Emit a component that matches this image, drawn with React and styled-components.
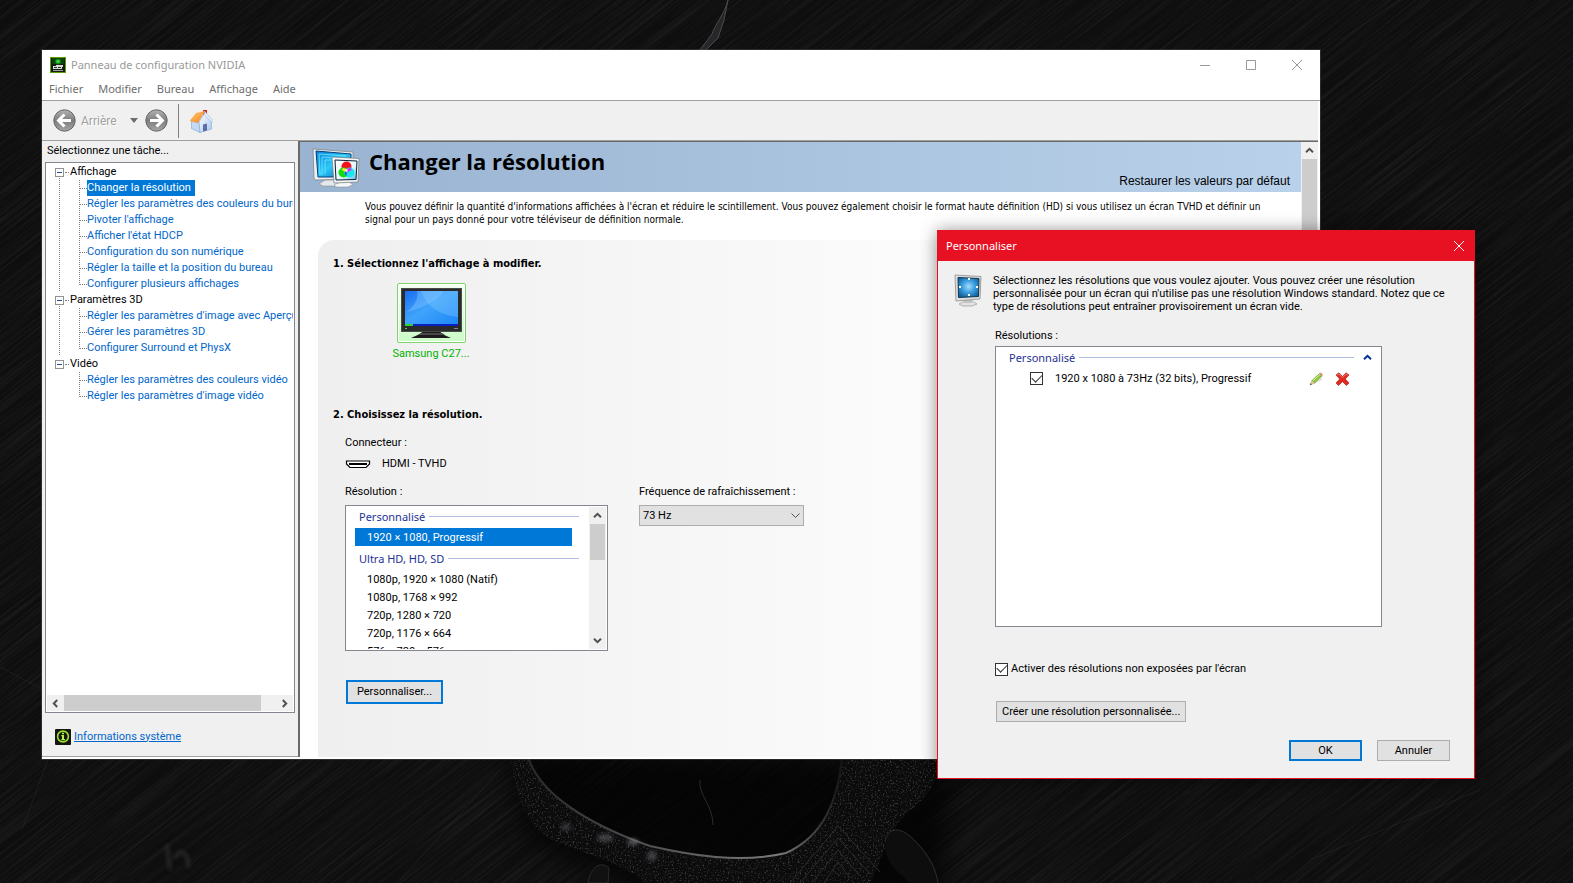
import { useState } from 'react';
import styled, { createGlobalStyle, css } from 'styled-components';

const Fonts = {
  TAHOMA: "Roboto, 'DejaVu Sans Condensed', sans-serif",
  CONDENSED: "'DejaVu Sans Condensed', 'DejaVu Sans', sans-serif",
  SEGOE: "'Noto Sans', 'Open Sans', sans-serif",
  ARIAL: "'Liberation Sans', Arial, sans-serif",
  TREBUCHET: "'Open Sans', 'Noto Sans', sans-serif",
};

const Colors = {
  FACE: '#f0f0f0',
  BUTTON: '#e1e1e1',
  BUTTON_BORDER: '#adadad',
  BOX_BORDER: '#828790',
  SHADOW: '#a0a0a0',
  DARK_SHADOW: '#696969',
  SELECTED: '#0078d7',
  LINK: '#0066cc',
  GROUP: '#1e3296',
  RED: '#e81123',
  THUMB: '#cdcdcd',
};

const GlobalStyle = createGlobalStyle`
  * {
    box-sizing: border-box;
  }

  body {
    margin: 0;
    background: #0e0e0f;
    font: 11px/16px ${Fonts.TAHOMA};
    color: #000;
  }

  ul {
    list-style: none;
    margin: 0;
    padding: 0;
  }

  h1, h2, h3, p {
    margin: 0;
    font-size: inherit;
  }

  button, select, input {
    margin: 0;
    font: inherit;
    color: inherit;
  }

  svg {
    display: block;
    flex: none;
  }
`;

/* ---------- Desktop ---------- */

const Desktop = styled.div`
  position: relative;
  min-height: 100vh;
  overflow: hidden;
`;

const WallpaperSvg = styled.svg`
  position: absolute;
  inset: 0;
  width: 100%;
  height: 100%;
`;

const Wallpaper = () => (
  <WallpaperSvg viewBox="0 0 1573 883" preserveAspectRatio="xMidYMid slice" aria-hidden="true">
    <defs>
      <filter id="brushed" x="0" y="0" width="100%" height="100%">
        <feTurbulence type="fractalNoise" baseFrequency="0.008 0.6" numOctaves="3" seed="8" />
        <feColorMatrix values="0 0 0 0 1  0 0 0 0 1  0 0 0 0 1  0.5 0 0 0 -0.19" />
      </filter>
      <filter id="speckle" x="0" y="0" width="100%" height="100%">
        <feTurbulence type="fractalNoise" baseFrequency="0.6" numOctaves="2" seed="3" />
        <feColorMatrix values="0 0 0 0 1  0 0 0 0 1  0 0 0 0 1  1.6 0 0 0 -0.86" />
        <feComposite in2="SourceGraphic" operator="in" />
      </filter>
      <filter id="soft" x="-20%" y="-20%" width="140%" height="140%">
        <feGaussianBlur stdDeviation="14" />
      </filter>
      <filter id="smudge" x="-50%" y="-50%" width="200%" height="200%">
        <feGaussianBlur stdDeviation="2" />
      </filter>
      <linearGradient id="rim" x1="0" y1="0" x2="1" y2="0">
        <stop offset="0" stopColor="#2a2a2c" />
        <stop offset=".6" stopColor="#66666a" />
        <stop offset=".8" stopColor="#7a7a7c" />
        <stop offset="1" stopColor="#141415" />
      </linearGradient>
    </defs>
    <rect width="1573" height="883" fill="#0e0e0f" />
    <g transform="rotate(-38 786 441)">
      <rect x="-300" y="-500" width="2200" height="1900" filter="url(#brushed)" opacity=".24" />
    </g>
    <path d="M505 750 530 840 660 900H940L955 760Z" fill="#000" opacity=".7" filter="url(#soft)" />
    <path
      d="M510 757C518 800 524 828 560 844 610 862 628 868 645 883H870C886 850 890 830 905 815 930 795 938 785 938 757H842C838 800 824 836 786 853 740 864 690 855 650 846 590 825 540 795 528 757Z"
      fill="#0b0b0c"
    />
    <path
      d="M510 757C518 800 524 828 560 844 610 862 628 868 645 883H870C886 850 890 830 905 815 930 795 938 785 938 757H842C838 800 824 836 786 853 740 864 690 855 650 846 590 825 540 795 528 757Z"
      filter="url(#speckle)"
      opacity=".45"
    />
    <path d="M528 757C540 795 590 825 650 846 690 855 740 864 786 853 824 836 838 800 842 757" fill="none" stroke="url(#rim)" strokeWidth="2" />
    <path d="M885 842C888 824 904 828 916 842 930 856 936 870 938 883H910C898 872 884 862 885 842Z" fill="#0d0d0e" />
    <path d="M885 842C888 824 904 828 916 842 930 856 936 870 938 883" fill="none" stroke="#2e2e30" />
    <path d="M588 883C590 868 600 860 609 868L608 883Z" fill="#111112" stroke="#2a2a2b" />
    <g fill="none" stroke="#2c2c2e">
      <path d="M790 883 838 826 880 872M800 883 838 838 870 874M812 883 838 850 860 876M824 883 838 862 850 878M700 780C698 795 713 805 713 825" />
      <path d="M0 667 40 688M22 830 70 700M400 880 500 770M90 883 230 770M1060 883 1190 790M1310 860 1480 790M1500 130 1573 60M1340 40 1400 0" opacity=".5" />
    </g>
    <g fill="#8d8d96" filter="url(#smudge)">
      <ellipse cx="605" cy="838" rx="8" ry="4" opacity=".4" />
      <ellipse cx="633" cy="842" rx="6" ry="3" opacity=".6" />
      <ellipse cx="652" cy="856" rx="5" ry="5" opacity=".4" />
      <ellipse cx="566" cy="827" rx="5" ry="4" opacity=".3" />
      <path d="M167 845 170 870M175 858C180 845 190 855 188 868" fill="none" stroke="#3c3c40" strokeWidth="2" />
    </g>
    <path d="M728 0C724 16 716 22 712 34L700 50H706L718 38 724 20Z" fill="#27272a" stroke="#4a4a4e" />
  </WallpaperSvg>
);

/* ---------- Shared controls ---------- */

const PlainButton = styled.button`
  display: flex;
  align-items: center;
  justify-content: center;
  padding: 0;
  border: 0;
  background: none;
`;

const PushButton = styled.button`
  height: ${({ $tall }) => ($tall ? 24 : 21)}px;
  min-width: ${({ $tall }) => ($tall ? 97 : 73)}px;
  padding: 0 5px;
  border: 1px solid ${Colors.BUTTON_BORDER};
  background: ${Colors.BUTTON};
  line-height: 16px;
  white-space: nowrap;

  ${({ $primary }) =>
    $primary &&
    css`
      border: 2px solid ${Colors.SELECTED};
    `}
`;

const CheckBox = styled.input`
  appearance: none;
  flex: none;
  display: grid;
  place-items: center;
  width: 13px;
  height: 13px;
  border: 1px solid #333;
  background: #fff;

  &:checked::after {
    content: '';
    width: 9px;
    height: 5px;
    margin-top: -4px;
    border: solid #333;
    border-width: 0 0 1px 1px;
    transform: rotate(-45deg);
  }
`;

const Chevron = ({ direction = 'up', color = '#505050' }) => {
  const turns = { up: 0, right: 90, down: 180, left: 270 };
  return (
    <svg width="9" height="9" viewBox="0 0 9 9" fill="none" stroke={color} strokeWidth="2">
      <path d="M1 6.2 4.5 2.8 8 6.2" transform={`rotate(${turns[direction]} 4.5 4.5)`} />
    </svg>
  );
};

const ScrollTrack = styled.div`
  display: flex;
  flex: none;
  flex-direction: ${({ $horizontal }) => ($horizontal ? 'row' : 'column')};
  justify-content: space-between;
  background: ${Colors.FACE};
  ${({ $horizontal }) => ($horizontal ? 'height: 16px;' : 'width: 17px; padding: 0 1px;')}
`;

const ScrollArrow = styled(PlainButton)`
  flex: none;
  height: ${({ $horizontal }) => ($horizontal ? 16 : 17)}px;
  width: ${({ $horizontal }) => ($horizontal ? 17 : 15)}px;
`;

const ScrollLane = styled.div`
  flex: 1;
  display: flex;
  flex-direction: ${({ $horizontal }) => ($horizontal ? 'row' : 'column')};
`;

const ScrollThumb = styled.div`
  flex: 0 0 ${({ $share }) => $share}%;
  background: ${Colors.THUMB};
`;

const ScrollBar = ({ horizontal, share }) => (
  <ScrollTrack $horizontal={horizontal}>
    <ScrollArrow type="button" $horizontal={horizontal} aria-label={horizontal ? 'Gauche' : 'Haut'}>
      <Chevron direction={horizontal ? 'left' : 'up'} />
    </ScrollArrow>
    <ScrollLane $horizontal={horizontal}>
      <ScrollThumb $share={share} />
    </ScrollLane>
    <ScrollArrow type="button" $horizontal={horizontal} aria-label={horizontal ? 'Droite' : 'Bas'}>
      <Chevron direction={horizontal ? 'right' : 'down'} />
    </ScrollArrow>
  </ScrollTrack>
);

const GroupHeader = styled.h3`
  display: flex;
  align-items: center;
  gap: 4px;
  height: 21px;
  padding-bottom: 2px;
  color: ${Colors.GROUP};
  font: 11px/16px ${Fonts.SEGOE};

  &::after {
    content: '';
    flex: 1;
    height: 1px;
    background: #b0bfe0;
  }
`;

/* ---------- Icons ---------- */

const NvidiaIcon = () => (
  <svg width="16" height="16" viewBox="0 0 16 16">
    <rect x=".5" y=".5" width="15" height="15" fill="#161a14" stroke="#5da000" />
    <path d="M2 1h12v6H2z" fill="#0f4210" />
    <circle cx="8" cy="4.5" r="3" fill="#18761a" />
    <circle cx="8" cy="4.5" r="1.8" fill="#2de32a" />
    <path d="M3 9h3V8h7v2h-1v2H3z" fill="#d7dbd7" />
    <path d="M4 10h3v1H4zM8 10h3v1H8z" fill="#2a2e2a" />
    <path d="M3 13h10v1H3z" fill="#9ba09b" />
  </svg>
);

const RoundArrow = ({ back }) => (
  <svg width="23" height="23" viewBox="0 0 23 23">
    <defs>
      <linearGradient id="round" x1="0" y1="0" x2="0" y2="1">
        <stop offset="0" stopColor="#b4b4b4" />
        <stop offset=".5" stopColor="#7c7c7c" />
        <stop offset="1" stopColor="#a6a6a6" />
      </linearGradient>
    </defs>
    <circle cx="11.5" cy="11.5" r="10.7" fill="url(#round)" stroke="#666" />
    <g transform={back ? undefined : 'rotate(180 11.5 11.5)'}>
      <path d="M11.5 5.5 5.5 11.5l6 6M6 11.5h12" fill="none" stroke="#fff" strokeWidth="3" />
    </g>
  </svg>
);

const HomeIcon = () => (
  <svg width="24" height="24" viewBox="0 0 24 24">
    <defs>
      <linearGradient id="roof" x1="0" y1="0" x2="1" y2="1">
        <stop offset="0" stopColor="#ffc978" />
        <stop offset="1" stopColor="#f2841b" />
      </linearGradient>
      <linearGradient id="wall" x1="0" y1="0" x2="1" y2="1">
        <stop offset="0" stopColor="#fff" />
        <stop offset="1" stopColor="#a9c8ee" />
      </linearGradient>
    </defs>
    <path d="M14 1h4v7h-4z" fill="#c6281c" />
    <path d="M2.500 12 11 14V23.500L2.500 19.500Z" fill="#c3d9f4" stroke="#7aa3d8" strokeWidth=".6" />
    <path d="M10 13 15.500 4 22.500 12v8l-11.500 3.500Z" fill="url(#wall)" stroke="#7aa3d8" strokeWidth=".6" />
    <path d="M14 15.500 18 14.500v7l-4 1.100Z" fill="#5d6fa5" />
    <path d="M15.500 2 24 11.500l-1.500 1.500L15.500 5.500Z" fill="#e8f0fb" stroke="#8fa9cf" strokeWidth=".5" />
    <path d="M.5 12 7 4 16 2 9 14Z" fill="url(#roof)" />
  </svg>
);

const InfoIcon = () => (
  <svg width="16" height="16" viewBox="0 0 16 16">
    <rect width="16" height="16" rx="1" fill="#14160f" />
    <circle cx="8" cy="7.5" r="5.4" fill="none" stroke="#9be22d" strokeWidth="1.6" />
    <path d="M7 3.8h2v1.4H7zM6.300 6H9v4h1v1.200H6.300V10H7V7.200h-.7z" fill="#b9f04a" />
  </svg>
);

const DisplaysIcon = () => (
  <svg width="48" height="40" viewBox="0 0 48 40">
    <defs>
      <linearGradient id="screenBack" x1="0" y1="0" x2="1" y2="1">
        <stop offset="0" stopColor="#0b7fd8" />
        <stop offset=".5" stopColor="#2cc9f7" />
        <stop offset="1" stopColor="#0a56b4" />
      </linearGradient>
      <linearGradient id="screenFront" x1="0" y1="0" x2="1" y2="1">
        <stop offset="0" stopColor="#fff" />
        <stop offset=".6" stopColor="#e2f6fd" />
        <stop offset="1" stopColor="#4db8e6" />
      </linearGradient>
    </defs>
    <path d="M7 36 13 32h12l5 3-7 3H11Z" fill="#e6e9eb" stroke="#8b9196" strokeWidth=".6" />
    <path d="M1 1 41 4V13L40 31 3 32 2 30Z" fill="#eceff1" stroke="#7f868c" strokeWidth=".8" />
    <path d="M4 3 39 6V29H6Z" fill="url(#screenBack)" stroke="#063f78" />
    <path d="M7 6 34 8M7 6 8 27M10 9 32 10.5M10 9v18M13 12h17M13 12v14" stroke="#6fe8ff" fill="none" strokeWidth=".8" />
    <path d="M22 37 28 34h9l4 2.5L36 39H24Z" fill="#f4f6f7" stroke="#8b9196" strokeWidth=".6" />
    <path d="M20 9 47 10.5 46 34 22 35Z" fill="#f4f6f7" stroke="#7f868c" strokeWidth=".8" />
    <path d="M23 12 45 13 44 31.5 24 32Z" fill="url(#screenFront)" stroke="#0a2036" />
    <circle cx="34.5" cy="18.5" r="5" fill="#f5121d" />
    <circle cx="31.5" cy="24.5" r="5" fill="#11dd16" />
    <circle cx="37.5" cy="24.5" r="5" fill="#18e6ea" />
    <path d="M34.5 21 31 20 29.7 22 34.5 24.5Z" fill="#ffe81a" />
    <path d="M34.5 21 38.5 20 39.5 22 34.5 24.5Z" fill="#f01df0" />
    <path d="M34.5 22V28.5L32.8 25.5Z" fill="#1426f2" />
    <circle cx="34.5" cy="22.5" r="1.2" fill="#fff" />
  </svg>
);

const MonitorIcon = () => (
  <svg width="61" height="50" viewBox="0 0 61 50">
    <defs>
      <linearGradient id="panel" x1="0" y1="0" x2="1" y2="1">
        <stop offset="0" stopColor="#1a6cf2" />
        <stop offset=".45" stopColor="#3fa4fb" />
        <stop offset="1" stopColor="#1c86f6" />
      </linearGradient>
    </defs>
    <path d="M22 43h17l2 3 9 4H10l9-4Z" fill="#1c1c1c" />
    <path d="M20 45h21l3 2H17Z" fill="#4a4a4a" />
    <rect width="61" height="44" fill="#4a4a4a" />
    <rect x="1" y="1" width="59" height="42" fill="#2a2a2a" />
    <rect x="4" y="3" width="53" height="35" fill="url(#panel)" />
    <path d="M4 25C20 20 36 14 43 3H16C18 12 12 20 4 25Z" fill="#7cc6ff" opacity=".45" />
    <path d="M20 3C26 20 40 27 57 29V3Z" fill="#8fd2ff" opacity=".3" />
    <rect x="4" y="36" width="53" height="2" fill="#0b1fc4" />
    <rect x="4" y="36" width="8" height="2" fill="#2ed12e" />
    <rect x="4" y="40" width="2" height="1" fill="#32e032" />
    <rect x="53" y="40" width="4" height="1" fill="#888" />
  </svg>
);

const HdmiIcon = () => (
  <svg width="26" height="9" viewBox="0 0 26 9" fill="none" stroke="#000">
    <path d="M1.500 1h23v3L21 7.500H5L1.500 4Z" fill="#fff" strokeWidth="1.2" />
    <path d="M4 4h18" strokeWidth="2" />
  </svg>
);

const ScreenIcon = () => (
  <svg width="28" height="33" viewBox="0 0 28 33">
    <defs>
      <radialGradient id="glow" cx=".5" cy=".45" r=".6">
        <stop offset="0" stopColor="#a5dcfb" />
        <stop offset=".5" stopColor="#3b9fe0" />
        <stop offset="1" stopColor="#155f9e" />
      </radialGradient>
    </defs>
    <path d="M5 30 11 27h7l5 3-5 2H9Z" fill="#e3e3e3" stroke="#999" strokeWidth=".7" />
    <path d="M10 26h8v3h-8z" fill="#c4c4c4" />
    <path d="M1 1 27 2.5 26 25 2 27Z" fill="#dedede" stroke="#8d8d8d" strokeWidth=".8" />
    <path d="M4 3.5 25 4.5 24.5 22.5 4.5 23.5Z" fill="url(#glow)" stroke="#12384f" />
    <path d="M14 4h2v2h-2zM14 20h2v2h-2zM5 12h2v2H5zM22 12h2v2h-2z" fill="#fff" />
  </svg>
);

const PencilIcon = () => (
  <svg width="15" height="14" viewBox="0 0 15 14">
    <path d="M3 13 12 8l2-3-9 7Z" fill="#000" opacity=".2" />
    <path d="M3 8.5 10.5 1.5 13 4 5.5 11.2Z" fill="#8fc93e" stroke="#5d8f22" strokeWidth=".6" />
    <path d="M4 8.7 11 2.3" stroke="#d4f09a" />
    <path d="M10.5 1.5 11.8.5 14 2.8 13 4Z" fill="#e08a80" />
    <path d="M3 8.5 5.5 11.2 1 13Z" fill="#eed0a0" stroke="#a38350" strokeWidth=".4" />
    <path d="M1.8 11.2 3 12.3 1 13Z" fill="#333" />
  </svg>
);

const DeleteIcon = () => (
  <svg width="15" height="14" viewBox="0 0 15 14">
    <path d="M1 3 4 .8 7.5 4.5 11 .8 14 3 10.3 7 14 11 11.5 13.5 7.5 9.7 3.5 13.5 1 11 4.7 7Z" fill="#e02a20" stroke="#a8150f" strokeWidth=".6" />
    <path d="M2.5 3 4 2 7.5 5.7 11 2 12.5 3" fill="none" stroke="#f58a7e" strokeWidth=".8" />
  </svg>
);

/* ---------- Main window ---------- */

const Window = styled.main`
  position: absolute;
  inset: 50px 253px 124px 42px;
  display: flex;
  flex-direction: column;
  background: ${Colors.FACE};
  border-right: 2px solid #fff;
  box-shadow: 0 0 0 1px rgba(70, 70, 70, 0.5);
`;

const TitleBar = styled.header`
  display: flex;
  align-items: center;
  height: 29px;
  padding-left: 8px;
  margin-right: -2px;
  background: #fff;
  color: #999;
  font: 11px/16px ${Fonts.SEGOE};
`;

const WindowTitle = styled.span`
  flex: 1;
  padding-left: 5px;
`;

const CaptionButton = styled(PlainButton)`
  width: 46px;
  height: 28px;
`;

const MenuBar = styled.nav`
  display: flex;
  gap: 15px;
  height: 22px;
  padding: 0 7px 2px;
  margin-right: -2px;
  background: #fff;
  border-bottom: 1px solid ${Colors.SHADOW};
  color: #6d6d6d;
  font: 11px/16px ${Fonts.SEGOE};
`;

const ToolBar = styled.div`
  display: flex;
  align-items: center;
  height: 40px;
  padding: 0 11px;
  border-bottom: 1px solid ${Colors.SHADOW};
`;

const BackButton = styled(PlainButton)`
  gap: 5px;
  color: ${Colors.SHADOW};
  font-size: 12px;
  text-shadow: 1px 1px #fff;
`;

const HistoryButton = styled(PlainButton)`
  width: 18px;
  margin: 0 2px 0 8px;
`;

const ToolSeparator = styled.div`
  width: 1px;
  height: 34px;
  margin: 0 10px;
  background: #808080;
`;

const Body = styled.div`
  flex: 1;
  min-height: 0;
  display: grid;
  grid-template-columns: 256px minmax(0, 1fr);
  border-bottom: 2px solid #fff;
`;

const SideBar = styled.aside`
  display: flex;
  flex-direction: column;
  min-height: 0;
  padding: 0 3px;
  border-bottom: 1px solid ${Colors.SHADOW};
`;

const SideTitle = styled.h2`
  height: 21px;
  padding: 2px;
  font-weight: normal;
`;

const TreeBox = styled.div`
  flex: 1;
  min-height: 0;
  display: flex;
  flex-direction: column;
  justify-content: space-between;
  padding: 1px;
  border: 1px solid ${Colors.BOX_BORDER};
  background: #fff;
`;

const Tree = styled.ul`
  overflow: hidden;
  padding-left: 8px;
`;

const TreeGroup = styled.li`
  background: ${({ $last }) =>
    $last ? 'none' : 'repeating-linear-gradient(#808080 0 1px, transparent 1px 2px) 4px 8px / 1px 100% no-repeat'};
`;

const TreeHead = styled.div`
  display: flex;
  align-items: center;
  height: 16px;

  &::after {
    content: '';
    order: 1;
    width: 4px;
    margin: 0 1px;
    border-top: 1px dotted #808080;
  }
`;

const TreeLabel = styled.span`
  order: 2;
`;

const Toggle = styled(PlainButton)`
  width: 9px;
  height: 9px;
  border: 1px solid #919191;
  background: #fff;

  &::after {
    content: '';
    width: 5px;
    height: 1px;
    background: #2b3f9e;
  }
`;

const TreeChildren = styled.ul`
  margin-left: 24px;
  background: repeating-linear-gradient(#808080 0 1px, transparent 1px 2px) 0 0 / 1px calc(100% - 8px) no-repeat;
`;

const TreeItem = styled.li`
  display: flex;
  align-items: center;
  height: 16px;

  &::before {
    content: '';
    flex: none;
    width: 8px;
    border-top: 1px dotted #808080;
  }
`;

const TreeLink = styled.a`
  color: ${Colors.LINK};
  line-height: 16px;
  text-decoration: none;
  white-space: nowrap;

  ${({ $selected }) =>
    $selected &&
    css`
      padding-right: 4px;
      background: ${Colors.SELECTED};
      color: #fff;
    `}
`;

const SideFooter = styled.footer`
  display: flex;
  align-items: center;
  gap: 3px;
  height: 43px;
  padding: 4px 10px 0;

  a {
    color: ${Colors.LINK};
  }
`;

const Page = styled.section`
  display: flex;
  min-width: 0;
  min-height: 0;
  border-top: 1px solid ${Colors.DARK_SHADOW};
  border-left: 2px solid ${Colors.DARK_SHADOW};
  background: #fff;
`;

const PageContent = styled.div`
  flex: 1;
  min-width: 0;
  display: flex;
  flex-direction: column;
`;

const Banner = styled.header`
  display: flex;
  justify-content: space-between;
  height: 50px;
  padding: 6px 11px 2px 12px;
  background: linear-gradient(90deg, #99b3d1, #b9d1ea);
`;

const BannerTitle = styled.div`
  display: flex;
  gap: 9px;

  h1 {
    font: bold 22px/26px ${Fonts.TREBUCHET};
  }
`;

const RestoreButton = styled(PlainButton)`
  align-self: flex-end;
  font: 12px/18px ${Fonts.ARIAL};
`;

const Description = styled.p`
  padding: 8px 14px 14px 65px;
  font: 10px/13px ${Fonts.CONDENSED};
`;

const Panel = styled.div`
  flex: 1;
  min-height: 0;
  margin: 0 14px 0 18px;
  padding: 16px 15px;
  border-radius: 16px 0 0 0;
  background: linear-gradient(90deg, #efefef, #fff 80%);
`;

const StepTitle = styled.h2`
  font: bold 11px/16px ${Fonts.CONDENSED};
`;

const DisplayCard = styled(PlainButton)`
  flex-direction: column;
  width: 78px;
  margin: 11px 0 45px 59px;
  color: #00b400;
`;

const DisplayFrame = styled.span`
  display: grid;
  place-items: center;
  width: 69px;
  height: 60px;
  margin-bottom: 3px;
  border: 1px solid #7fd36a;
  border-radius: 2px;
  background: linear-gradient(#f4fff2, #ccfbc8);
  box-shadow: inset 0 0 0 1px #fff;
`;

const Step = styled.div`
  padding: 12px 0 0 12px;
`;

const Connector = styled.div`
  display: flex;
  align-items: center;
  gap: 11px;
  margin: 5px 0 12px;
`;

const Columns = styled.div`
  display: flex;
  gap: 31px;
`;

const FieldLabel = styled.label`
  display: block;
  margin-bottom: 5px;
`;

const ListBox = styled.div`
  display: flex;
  width: 263px;
  height: 146px;
  padding: 1px 1px 1px 9px;
  border: 1px solid ${Colors.BOX_BORDER};
  background: #fff;
`;

const ListContent = styled.div`
  flex: 1;
  overflow: hidden;
  padding-right: 10px;

  h3 {
    padding-left: 4px;
  }
`;

const ListOption = styled.li`
  height: 18px;
  margin-right: 7px;
  padding: 2px 12px 0;
  white-space: nowrap;

  ${({ $selected }) =>
    $selected &&
    css`
      margin-bottom: 3px;
      background: ${Colors.SELECTED};
      color: #fff;
    `}
`;

const SelectWrap = styled.div`
  display: grid;
  align-items: center;
  justify-items: end;
  width: 165px;

  > * {
    grid-area: 1 / 1;
  }

  svg {
    margin-right: 4px;
    pointer-events: none;
  }
`;

const Select = styled.select`
  appearance: none;
  width: 100%;
  height: 21px;
  padding: 0 3px;
  border: 1px solid ${Colors.BUTTON_BORDER};
  border-radius: 0;
  background: ${Colors.BUTTON};
`;

const PanelAction = styled.div`
  padding: 29px 0 0 1px;
`;

/* ---------- Dialog ---------- */

const Dialog = styled.section`
  position: absolute;
  top: 230px;
  right: 98px;
  width: 538px;
  border: 1px solid ${Colors.RED};
  background: ${Colors.FACE};
  box-shadow: 0 1px 16px rgba(0, 0, 0, 0.45);
`;

const DialogTitleBar = styled.header`
  display: flex;
  align-items: center;
  justify-content: space-between;
  height: 30px;
  padding-left: 8px;
  background: ${Colors.RED};
  color: #fff;
  font: 11px/16px ${Fonts.SEGOE};
`;

const DialogCaption = styled(PlainButton)`
  width: 30px;
  height: 28px;
`;

const DialogBody = styled.div`
  padding: 13px 24px 17px 16px;
`;

const Intro = styled.div`
  display: flex;
  gap: 11px;
  line-height: 13px;
`;

const DialogContent = styled.div`
  padding: 15px 0 0 41px;
`;

const ResolutionList = styled.div`
  width: 387px;
  height: 281px;
  margin: 2px 0 34px;
  padding: 1px 8px 0 13px;
  border: 1px solid ${Colors.BOX_BORDER};
  background: #fff;
`;

const ListHead = styled.div`
  display: flex;
  align-items: center;
  gap: 7px;

  h3 {
    flex: 1;
  }
`;

const CollapseButton = styled(PlainButton)`
  width: 12px;
  height: 21px;
  padding-bottom: 2px;
`;

const ResolutionRow = styled.div`
  display: flex;
  align-items: center;
  height: 19px;
  padding: 0 23px 0 21px;

  label {
    flex: 1;
    display: flex;
    align-items: center;
    gap: 12px;
  }
`;

const RowAction = styled(PlainButton)`
  margin-left: 11px;
`;

const CheckLabel = styled.label`
  display: flex;
  align-items: center;
  gap: 3px;
  margin-bottom: 24px;
`;

const DialogFooter = styled.footer`
  display: flex;
  justify-content: flex-end;
  gap: 15px;
  padding-top: 18px;
`;

const Indent = styled.div`
  padding-left: 1px;
`;

const MENUS = ['Fichier', 'Modifier', 'Bureau', 'Affichage', 'Aide'];

const TASKS = [
  {
    title: 'Affichage',
    items: [
      'Changer la résolution',
      'Régler les paramètres des couleurs du bureau',
      "Pivoter l'affichage",
      "Afficher l'état HDCP",
      'Configuration du son numérique',
      'Régler la taille et la position du bureau',
      'Configurer plusieurs affichages',
    ],
  },
  {
    title: 'Paramètres 3D',
    items: [
      "Régler les paramètres d'image avec Aperçu",
      'Gérer les paramètres 3D',
      'Configurer Surround et PhysX',
    ],
  },
  {
    title: 'Vidéo',
    items: ['Régler les paramètres des couleurs vidéo', "Régler les paramètres d'image vidéo"],
  },
];

const RESOLUTIONS = [
  { title: 'Personnalisé', items: ['1920 × 1080, Progressif'] },
  {
    title: 'Ultra HD, HD, SD',
    items: ['1080p, 1920 × 1080 (Natif)', '1080p, 1768 × 992', '720p, 1280 × 720', '720p, 1176 × 664', '576p, 720 × 576'],
  },
];

const TaskTree = () => {
  const [selected, setSelected] = useState('Changer la résolution');

  return (
    <Tree>
      {TASKS.map((group, index) => (
        <TreeGroup key={group.title} $last={index === TASKS.length - 1}>
          <TreeHead>
            <Toggle type="button" aria-label={group.title} />
            <TreeLabel>{group.title}</TreeLabel>
          </TreeHead>
          <TreeChildren>
            {group.items.map(item => (
              <TreeItem key={item}>
                <TreeLink href="#" $selected={item === selected} onClick={() => setSelected(item)}>
                  {item}
                </TreeLink>
              </TreeItem>
            ))}
          </TreeChildren>
        </TreeGroup>
      ))}
    </Tree>
  );
};

const ResolutionPicker = () => {
  const [selected, setSelected] = useState('1920 × 1080, Progressif');

  return (
    <ListBox role="listbox" aria-labelledby="resolution-label">
      <ListContent>
        {RESOLUTIONS.map(group => (
          <div key={group.title}>
            <GroupHeader>{group.title}</GroupHeader>
            <ul>
              {group.items.map(item => (
                <ListOption
                  key={item}
                  role="option"
                  aria-selected={item === selected}
                  $selected={item === selected}
                  onClick={() => setSelected(item)}
                >
                  {item}
                </ListOption>
              ))}
            </ul>
          </div>
        ))}
      </ListContent>
      <ScrollBar share={33} />
    </ListBox>
  );
};

const ControlPanel = () => (
  <Window>
    <TitleBar>
      <NvidiaIcon />
      <WindowTitle>Panneau de configuration NVIDIA</WindowTitle>
      <CaptionButton type="button" aria-label="Réduire">
        <svg width="10" height="10" stroke="#999" fill="none">
          <path d="M0 5.5h10" />
        </svg>
      </CaptionButton>
      <CaptionButton type="button" aria-label="Agrandir">
        <svg width="10" height="10" stroke="#999" fill="none">
          <path d="M.5.5h9v9h-9z" />
        </svg>
      </CaptionButton>
      <CaptionButton type="button" aria-label="Fermer">
        <svg width="10" height="10" stroke="#999" fill="none">
          <path d="M0 0 10 10M10 0 0 10" />
        </svg>
      </CaptionButton>
    </TitleBar>
    <MenuBar>
      {MENUS.map(menu => (
        <PlainButton type="button" key={menu}>
          {menu}
        </PlainButton>
      ))}
    </MenuBar>
    <ToolBar>
      <BackButton type="button">
        <RoundArrow back />
        Arrière
      </BackButton>
      <HistoryButton type="button" aria-label="Historique">
        <svg width="8" height="5" fill="#6d6d6d">
          <path d="M0 0h8L4 5Z" />
        </svg>
      </HistoryButton>
      <PlainButton type="button" aria-label="Suivant">
        <RoundArrow />
      </PlainButton>
      <ToolSeparator />
      <PlainButton type="button" aria-label="Accueil">
        <HomeIcon />
      </PlainButton>
    </ToolBar>
    <Body>
      <SideBar>
        <SideTitle>Sélectionnez une tâche...</SideTitle>
        <TreeBox>
          <TaskTree />
          <ScrollBar horizontal share={93} />
        </TreeBox>
        <SideFooter>
          <InfoIcon />
          <a href="#">Informations système</a>
        </SideFooter>
      </SideBar>
      <Page>
        <PageContent>
          <Banner>
            <BannerTitle>
              <DisplaysIcon />
              <h1>Changer la résolution</h1>
            </BannerTitle>
            <RestoreButton type="button">Restaurer les valeurs par défaut</RestoreButton>
          </Banner>
          <Description>
            Vous pouvez définir la quantité d'informations affichées à l'écran et réduire le scintillement. Vous pouvez
            également choisir le format haute définition (HD) si vous utilisez un écran TVHD et définir un signal pour un
            pays donné pour votre téléviseur de définition normale.
          </Description>
          <Panel>
            <StepTitle>1. Sélectionnez l'affichage à modifier.</StepTitle>
            <DisplayCard type="button">
              <DisplayFrame>
                <MonitorIcon />
              </DisplayFrame>
              Samsung C27...
            </DisplayCard>
            <StepTitle>2. Choisissez la résolution.</StepTitle>
            <Step>
              <div>Connecteur :</div>
              <Connector>
                <HdmiIcon />
                HDMI - TVHD
              </Connector>
              <Columns>
                <div>
                  <FieldLabel as="div" id="resolution-label">
                    Résolution :
                  </FieldLabel>
                  <ResolutionPicker />
                </div>
                <div>
                  <FieldLabel htmlFor="refresh-rate">Fréquence de rafraîchissement :</FieldLabel>
                  <SelectWrap>
                    <Select id="refresh-rate">
                      <option>73 Hz</option>
                    </Select>
                    <svg width="9" height="6" fill="none" stroke="#505050">
                      <path d="M.5.5 4.5 4.5 8.5.5" />
                    </svg>
                  </SelectWrap>
                </div>
              </Columns>
              <PanelAction>
                <PushButton type="button" $tall $primary>
                  Personnaliser...
                </PushButton>
              </PanelAction>
            </Step>
          </Panel>
        </PageContent>
        <ScrollBar share={60} />
      </Page>
    </Body>
  </Window>
);

const CustomizeDialog = () => (
  <Dialog role="dialog" aria-labelledby="dialog-title">
    <DialogTitleBar>
      <span id="dialog-title">Personnaliser</span>
      <DialogCaption type="button" aria-label="Fermer">
        <svg width="10" height="10" stroke="#fff" fill="none">
          <path d="M0 0 10 10M10 0 0 10" />
        </svg>
      </DialogCaption>
    </DialogTitleBar>
    <DialogBody>
      <Intro>
        <ScreenIcon />
        <p>
          Sélectionnez les résolutions que vous voulez ajouter. Vous pouvez créer une résolution personnalisée pour un
          écran qui n'utilise pas une résolution Windows standard. Notez que ce type de résolutions peut entraîner
          provisoirement un écran vide.
        </p>
      </Intro>
      <DialogContent>
        <div>Résolutions :</div>
        <ResolutionList>
          <ListHead>
            <GroupHeader>Personnalisé</GroupHeader>
            <CollapseButton type="button" aria-label="Réduire le groupe">
              <Chevron color="#003399" />
            </CollapseButton>
          </ListHead>
          <ResolutionRow>
            <label>
              <CheckBox type="checkbox" defaultChecked />
              1920 x 1080 à 73Hz (32 bits), Progressif
            </label>
            <RowAction type="button" aria-label="Modifier">
              <PencilIcon />
            </RowAction>
            <RowAction type="button" aria-label="Supprimer">
              <DeleteIcon />
            </RowAction>
          </ResolutionRow>
        </ResolutionList>
        <CheckLabel>
          <CheckBox type="checkbox" defaultChecked />
          Activer des résolutions non exposées par l'écran
        </CheckLabel>
        <Indent>
          <PushButton type="button">Créer une résolution personnalisée...</PushButton>
        </Indent>
      </DialogContent>
      <DialogFooter>
        <PushButton type="button" $primary>
          OK
        </PushButton>
        <PushButton type="button">Annuler</PushButton>
      </DialogFooter>
    </DialogBody>
  </Dialog>
);

const App = () => (
  <>
    <GlobalStyle />
    <Desktop>
      <Wallpaper />
      <ControlPanel />
      <CustomizeDialog />
    </Desktop>
  </>
);

export default App;
